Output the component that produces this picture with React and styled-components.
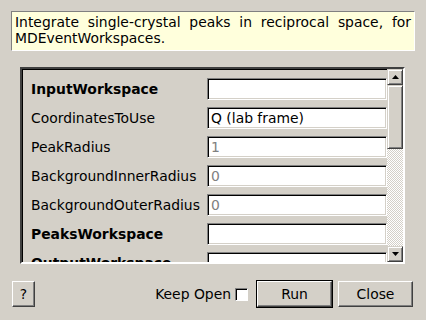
import React from 'react';
import styled, { createGlobalStyle } from 'styled-components';

const Global = createGlobalStyle`
  html, body { margin: 0; padding: 0; background: #d4d0c8; }
  body { font-family: "DejaVu Sans", "Noto Sans", sans-serif; font-size: 13.9px; color: #000; }
  * { box-sizing: border-box; }
`;

const Dialog = styled.div`
  width: 426px;
  height: 320px;
  display: flex;
  flex-direction: column;
  padding: 11px 11px 0 11px;
  overflow: hidden;
`;

const Description = styled.div`
  height: 40px;
  background: #ffffdc;
  border: 1px solid;
  border-color: #808080 #ffffff #ffffff #808080;
  padding: 2px 3px 0 3px;
  line-height: 16px;
  text-align: justify;
`;

const Panel = styled.div`
  margin: 16px 10px 0 9px;
  height: 197px;
  display: flex;
  border: 2px solid;
  border-color: #404040 #ffffff #ffffff #404040;
  box-shadow: inset 1px 1px 0 #000;
  overflow: hidden;
`;

const Rows = styled.div`
  flex: 1;
  display: flex;
  flex-direction: column;
  gap: 7px;
  padding-top: 9px;
  overflow: hidden;
`;

const Row = styled.div`
  display: flex;
  align-items: center;
  height: 22px;
  flex: none;
`;

const Label = styled.div`
  width: 185px;
  padding-left: 9px;
  font-weight: ${p => (p.$required ? 'bold' : 'normal')};
  white-space: nowrap;
`;

const Field = styled.div`
  flex: 1;
  height: 22px;
  background: #fff;
  border: 1px solid;
  border-color: #808080 #ffffff #ffffff #808080;
  box-shadow: inset 1px 1px 0 #000, inset -1px -1px 0 #d4d0c8;
  padding: 0 3px;
  display: flex;
  align-items: center;
  color: ${p => (p.$placeholder ? '#808080' : '#000')};
  white-space: nowrap;
`;

const ScrollBar = styled.div`
  width: 16px;
  display: flex;
  flex-direction: column;
  flex: none;
`;

const Raised = styled.div`
  background: #d4d0c8;
  border: 1px solid;
  border-color: #d4d0c8 #404040 #404040 #d4d0c8;
  box-shadow: inset 1px 1px 0 #ffffff, inset -1px -1px 0 #808080;
`;

const ArrowButton = styled(Raised)`
  height: 16px;
  flex: none;
  display: flex;
  align-items: center;
  justify-content: center;
`;

const Thumb = styled(Raised)`
  height: 64px;
  flex: none;
`;

const Track = styled.div`
  flex: 1;
  background: repeating-conic-gradient(#ffffff 0 25%, #d4d0c8 0 50%) 0 0 / 2px 2px;
`;

const Footer = styled.div`
  display: flex;
  align-items: center;
  margin-top: 17px;
  padding: 0 2px 0 1px;
`;

const Button = styled.button`
  font: inherit;
  color: #000;
  width: ${p => p.$w}px;
  height: 26px;
  padding: 0;
  background: #d4d0c8;
  border: 1px solid;
  border-color: #ffffff #404040 #404040 #ffffff;
  box-shadow: inset -1px -1px 0 #808080;
  ${p => p.$default && `
    outline: 1px solid #000;
    outline-offset: 0;
    margin: 0 1px;
  `}
`;

const Spacer = styled.div`
  flex: 1;
`;

const KeepOpen = styled.label`
  display: flex;
  align-items: center;
  gap: 4px;
  margin-right: 8px;
`;

const Check = styled.span`
  width: 13px;
  height: 13px;
  background: #fff;
  border: 1px solid;
  border-color: #808080 #ffffff #ffffff #808080;
  box-shadow: inset 1px 1px 0 #000;
`;

const ButtonGroup = styled.div`
  display: flex;
  align-items: center;
  gap: 5px;
`;

const Arrow = ({ up }) => (
  <svg width="7" height="4" viewBox="0 0 7 4">
    {up ? <polygon points="3.5,0 7,4 0,4" fill="#000" /> : <polygon points="0,0 7,0 3.5,4" fill="#000" />}
  </svg>
);

const props = [
  { name: 'InputWorkspace', required: true, value: '' },
  { name: 'CoordinatesToUse', value: 'Q (lab frame)' },
  { name: 'PeakRadius', value: '1', placeholder: true },
  { name: 'BackgroundInnerRadius', value: '0', placeholder: true },
  { name: 'BackgroundOuterRadius', value: '0', placeholder: true },
  { name: 'PeaksWorkspace', required: true, value: '' },
  { name: 'OutputWorkspace', required: true, value: '' },
];

export default function App() {
  return (
    <>
      <Global />
      <Dialog>
        <Description>
          Integrate single-crystal peaks in reciprocal space, for MDEventWorkspaces.
        </Description>
        <Panel>
          <Rows>
            {props.map(p => (
              <Row key={p.name}>
                <Label $required={p.required}>{p.name}</Label>
                <Field $placeholder={p.placeholder}>{p.value}</Field>
              </Row>
            ))}
          </Rows>
          <ScrollBar>
            <ArrowButton><Arrow up /></ArrowButton>
            <Thumb />
            <Track />
            <ArrowButton><Arrow /></ArrowButton>
          </ScrollBar>
        </Panel>
        <Footer>
          <Button $w={23}>?</Button>
          <Spacer />
          <KeepOpen>Keep Open <Check /></KeepOpen>
          <ButtonGroup>
            <Button $w={75} $default>Run</Button>
            <Button $w={75}>Close</Button>
          </ButtonGroup>
        </Footer>
      </Dialog>
    </>
  );
}
